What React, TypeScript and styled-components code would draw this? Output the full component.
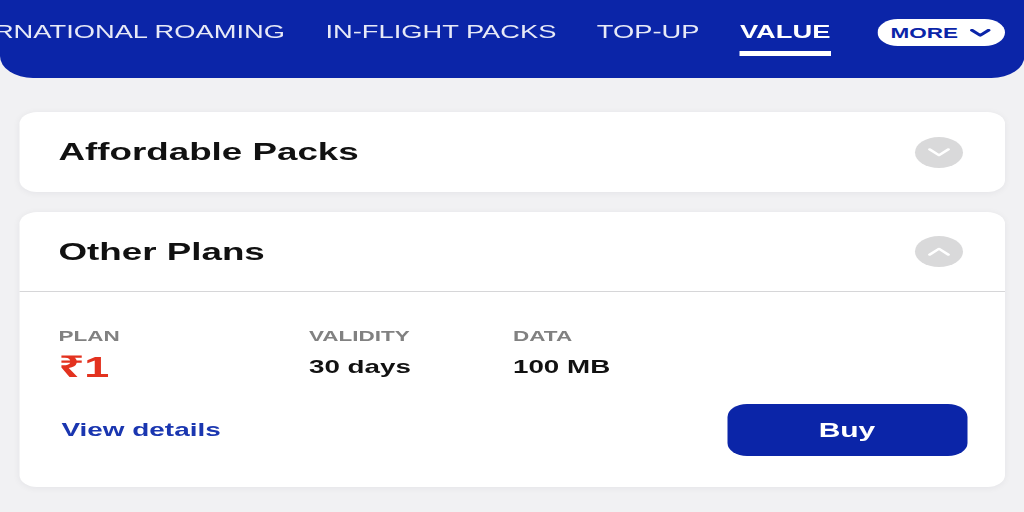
import styled, { createGlobalStyle } from 'styled-components';

// the reference is a phone screen stretched sideways, so the page is laid out
// narrow and widened by one scaleX on the stage
const STRETCH = 1.5;
const PAGE_WIDTH = 1024 / STRETCH;

const blue = '#0b25a8';

const GlobalStyle = createGlobalStyle`
  html, body {
    margin: 0;
    padding: 0;
    overflow: hidden;
    background: #f1f1f3;
  }

  body {
    font-family: "Liberation Sans", "Noto Sans", "DejaVu Sans", Arial, sans-serif;
  }

  * {
    box-sizing: border-box;
  }
`;

const Stage = styled.div`
  display: flex;
  flex-direction: column;
  width: ${PAGE_WIDTH}px;
  height: 512px;
  transform: scaleX(${STRETCH});
  transform-origin: 0 0;
`;

const Header = styled.header`
  display: flex;
  align-items: flex-start;
  flex-shrink: 0;
  height: 78px;
  background: ${blue};
  border-radius: 0 0 22px 22px;
  overflow: hidden;
`;

const TabStrip = styled.nav`
  flex: 1;
  min-width: 0;
  overflow: hidden;
  display: flex;
`;

// the strip is scrolled so the first tab starts off screen
const TabList = styled.div`
  display: flex;
  gap: 27px;
  flex-shrink: 0;
  margin-left: -45.5px;
`;

const Tab = styled.a<{ $active?: boolean }>`
  flex-shrink: 0;
  padding: 22px 0 8px;
  border-bottom: 5px solid ${({ $active }) => ($active ? '#fff' : 'transparent')};
  font-size: 18.2px;
  line-height: 21px;
  font-weight: ${({ $active }) => ($active ? 700 : 400)};
  color: ${({ $active }) => ($active ? '#fff' : 'rgba(255, 255, 255, 0.9)')};
  white-space: nowrap;
  cursor: pointer;
`;

const MoreButton = styled.button`
  display: inline-flex;
  align-items: center;
  gap: 7px;
  flex-shrink: 0;
  height: 27px;
  margin: 19px 13px 0 0;
  padding: 0 9px;
  border: none;
  border-radius: 14px;
  background: #fff;
  color: ${blue};
  font-family: inherit;
  font-size: 15px;
  font-weight: 700;
  line-height: 1;
  cursor: pointer;
`;

const Main = styled.main`
  flex: 1;
  display: flex;
  flex-direction: column;
  gap: 20px;
  padding: 34px 13px 0;
`;

const Card = styled.section`
  background: #fff;
  border-radius: 12px;
  box-shadow: 0 1px 6px rgba(20, 20, 50, 0.06);
`;

const CardHeader = styled.div<{ $open?: boolean }>`
  display: flex;
  align-items: center;
  justify-content: space-between;
  height: 80px;
  padding: 0 28px 0 26px;
  border-bottom: ${({ $open }) => ($open ? '1px solid #d6d6d8' : 'none')};
`;

const CardTitle = styled.h2`
  margin: 0;
  font-size: 24.5px;
  font-weight: 700;
  color: #111;
`;

const ToggleButton = styled.button`
  display: flex;
  align-items: center;
  justify-content: center;
  width: 32px;
  height: 31px;
  padding: 0;
  border: none;
  border-radius: 50%;
  background: #d9d9da;
  cursor: pointer;
`;

const CardBody = styled.div`
  display: flex;
  flex-direction: column;
  gap: 22px;
  padding: 35px 25px 31px 26px;
`;

const Stats = styled.div`
  display: grid;
  grid-template-columns: 167px 136px 1fr;
`;

const Stat = styled.div`
  display: flex;
  flex-direction: column;
  gap: 8px;
`;

const StatLabel = styled.span`
  font-size: 15px;
  line-height: 17px;
  font-weight: 700;
  color: #818181;
`;

const StatValue = styled.span<{ $accent?: boolean }>`
  font-size: ${({ $accent }) => ($accent ? '30px' : '18.5px')};
  line-height: 30px;
  font-weight: 700;
  color: ${({ $accent }) => ($accent ? '#e3321f' : '#111')};
`;

const Actions = styled.div`
  display: flex;
  align-items: center;
  justify-content: space-between;
`;

const DetailsLink = styled.a`
  padding-left: 2px;
  font-size: 18.6px;
  font-weight: 700;
  color: #1a36b0;
  cursor: pointer;
`;

const BuyButton = styled.button`
  width: 160px;
  height: 52px;
  border: none;
  border-radius: 13px;
  background: ${blue};
  color: #fff;
  font-family: inherit;
  font-size: 20px;
  font-weight: 700;
  cursor: pointer;
`;

const Chevron = ({ up, color, width, height, stroke }: {
  up?: boolean;
  color: string;
  width: number;
  height: number;
  stroke: number;
}) => (
  <svg width={width} height={height} viewBox="0 0 14 8" fill="none">
    <path
      d={up ? 'M1.5 6.8 L7 1.6 L12.5 6.8' : 'M1.5 1.2 L7 6.4 L12.5 1.2'}
      stroke={color}
      strokeWidth={stroke}
      strokeLinecap="round"
      strokeLinejoin="round"
    />
  </svg>
);

const tabs = ['INTERNATIONAL ROAMING', 'IN-FLIGHT PACKS', 'TOP-UP', 'VALUE'];

const App = () => {
  return (
    <>
      <GlobalStyle />
      <Stage>
        <Header>
          <TabStrip>
            <TabList>
              {tabs.map((tab) => (
                <Tab key={tab} $active={tab === 'VALUE'}>
                  {tab}
                </Tab>
              ))}
            </TabList>
          </TabStrip>
          <MoreButton type="button">
            MORE
            <Chevron color={blue} width={15} height={8} stroke={2.6} />
          </MoreButton>
        </Header>

        <Main>
          <Card>
            <CardHeader>
              <CardTitle>Affordable Packs</CardTitle>
              <ToggleButton type="button" aria-label="Expand">
                <Chevron color="#fff" width={16} height={9} stroke={1.9} />
              </ToggleButton>
            </CardHeader>
          </Card>

          <Card>
            <CardHeader $open>
              <CardTitle>Other Plans</CardTitle>
              <ToggleButton type="button" aria-label="Collapse">
                <Chevron up color="#fff" width={16} height={9} stroke={1.9} />
              </ToggleButton>
            </CardHeader>
            <CardBody>
              <Stats>
                <Stat>
                  <StatLabel>PLAN</StatLabel>
                  <StatValue $accent>₹1</StatValue>
                </Stat>
                <Stat>
                  <StatLabel>VALIDITY</StatLabel>
                  <StatValue>30 days</StatValue>
                </Stat>
                <Stat>
                  <StatLabel>DATA</StatLabel>
                  <StatValue>100 MB</StatValue>
                </Stat>
              </Stats>
              <Actions>
                <DetailsLink>View details</DetailsLink>
                <BuyButton type="button">Buy</BuyButton>
              </Actions>
            </CardBody>
          </Card>
        </Main>
      </Stage>
    </>
  );
};

export default App;
